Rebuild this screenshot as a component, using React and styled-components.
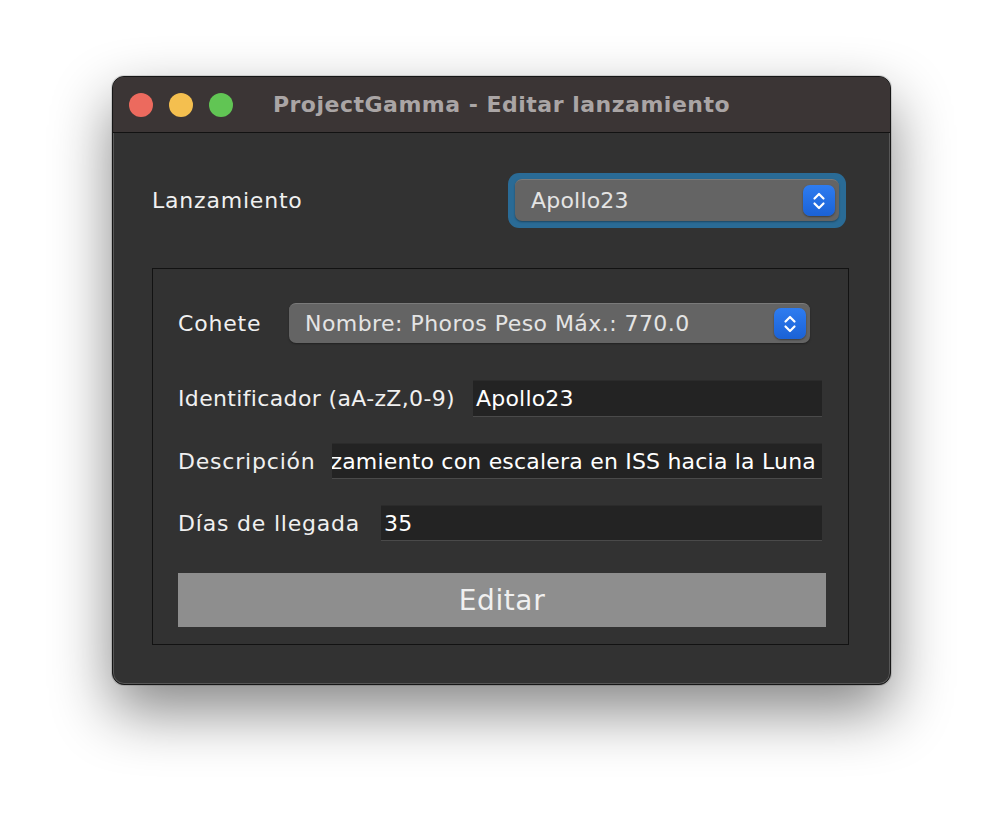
import React from 'react';
import styled, { createGlobalStyle } from 'styled-components';

const GlobalStyle = createGlobalStyle`
  html, body {
    margin: 0;
    padding: 0;
    background: #ffffff;
  }
  * {
    box-sizing: border-box;
  }
`;

const BODY_FONT = `"DejaVu Sans", "Liberation Sans", sans-serif`;

const Page = styled.div`
  width: 1004px;
  height: 834px;
  padding: 76px 0 0 112px;
  overflow: hidden;
`;

const Window = styled.div`
  width: 779px;
  height: 609px;
  border-radius: 12px;
  border: 1px solid #161616;
  background: #323232;
  overflow: hidden;
  box-shadow: 0 0 0 1px rgba(255, 255, 255, 0.18) inset, 0 0 0 1px rgba(0, 0, 0, 0.12),
    0 26px 60px rgba(0, 0, 0, 0.48);
  display: flex;
  flex-direction: column;
`;

const TitleBar = styled.div`
  height: 56px;
  flex: none;
  background: #3b3535;
  border-bottom: 1px solid #121212;
  display: flex;
  align-items: center;
  padding-left: 16px;
`;

const Lights = styled.div`
  display: flex;
  gap: 16px;
`;

const Light = styled.span`
  width: 24px;
  height: 24px;
  border-radius: 50%;
  background: ${(p) => p.color};
`;

const Title = styled.div`
  flex: 1;
  text-align: center;
  margin-left: -120px;
  font-family: "DejaVu Sans", "Liberation Sans", sans-serif;
  font-weight: 700;
  font-size: 22px;
  letter-spacing: 0.5px;
  color: #aaa5a5;
  white-space: nowrap;
`;

const Body = styled.div`
  flex: 1;
  padding: 40px 41px 40px 39px;
  display: flex;
  flex-direction: column;
  font-family: ${BODY_FONT};
  color: #eeeeee;
`;

const TopRow = styled.div`
  display: flex;
  align-items: center;
  justify-content: space-between;
  height: 55px;
  margin-right: 3px;
`;

const Label = styled.span`
  font-size: 22px;
  letter-spacing: ${(p) => p.spacing ?? 0.8}px;
  color: #f0f0f0;
  white-space: nowrap;
`;

const FocusRing = styled.div`
  width: 338px;
  height: 55px;
  border-radius: 11px;
  background: #2a6b96;
  padding: 6px 7px;
`;

const Select = styled.div`
  height: ${(p) => p.h}px;
  width: ${(p) => (p.w ? `${p.w}px` : '100%')};
  border-radius: 7px;
  background: #646464;
  border-top: 1px solid #7a7a7a;
  box-shadow: 0 1px 2px rgba(0, 0, 0, 0.35);
  display: flex;
  align-items: center;
  justify-content: space-between;
  padding: 0 4px 0 16px;
`;

const SelectText = styled.span`
  font-size: 22px;
  letter-spacing: ${(p) => p.spacing}px;
  color: #e4e4e4;
  white-space: nowrap;
`;

const Stepper = styled.div`
  width: 32px;
  height: 31px;
  border-radius: 7px;
  background: linear-gradient(#2e7cf0, #1b62d6);
  box-shadow: 0 1px 2px rgba(0, 0, 0, 0.4);
  display: flex;
  align-items: center;
  justify-content: center;
`;

const Panel = styled.div`
  margin-top: 40px;
  height: 377px;
  border: 1px solid #121212;
  padding: 34px 24px 0 25px;
  display: flex;
  flex-direction: column;
`;

const Row = styled.div`
  display: flex;
  align-items: center;
  justify-content: space-between;
  height: ${(p) => p.h}px;
  margin-top: ${(p) => p.mt}px;
  padding-right: ${(p) => p.pr}px;
`;

const Field = styled.div`
  width: ${(p) => p.w}px;
  height: 100%;
  background: #232323;
  border-top: 1px solid #2b2b2b;
  border-bottom: 1px solid #4a4a4a;
  display: flex;
  align-items: center;
  justify-content: ${(p) => (p.end ? 'flex-end' : 'flex-start')};
  padding: 0 ${(p) => (p.end ? 6 : 3)}px 0 3px;
  overflow: hidden;
  font-size: 22px;
  letter-spacing: 0.2px;
  color: #ffffff;
  white-space: nowrap;
`;

const Button = styled.button`
  margin-top: 32px;
  height: 54px;
  width: 648px;
  border: none;
  background: #8e8e8e;
  color: #f0f0f0;
  font-family: ${BODY_FONT};
  font-size: 28px;
  letter-spacing: 0.6px;
  padding: 0;
`;

const Chevrons = () => (
  <svg width="14" height="22" viewBox="0 0 14 22" fill="none">
    <path d="M2.5 8.5 L7 4 L11.5 8.5" stroke="#fff" strokeWidth="2.2" strokeLinecap="round" strokeLinejoin="round" />
    <path d="M2.5 13.5 L7 18 L11.5 13.5" stroke="#fff" strokeWidth="2.2" strokeLinecap="round" strokeLinejoin="round" />
  </svg>
);

const App = () => (
  <>
    <GlobalStyle />
    <Page>
      <Window>
        <TitleBar>
          <Lights>
            <Light color="#ec6a5e" />
            <Light color="#f4bf4f" />
            <Light color="#61c554" />
          </Lights>
          <Title>ProjectGamma - Editar lanzamiento</Title>
        </TitleBar>
        <Body>
          <TopRow>
            <Label>Lanzamiento</Label>
            <FocusRing>
              <Select h={42}>
                <SelectText spacing={0.2}>Apollo23</SelectText>
                <Stepper>
                  <Chevrons />
                </Stepper>
              </Select>
            </FocusRing>
          </TopRow>
          <Panel>
            <Row h={40} mt={0} pr={14}>
              <Label>Cohete</Label>
              <Select h={40} w={521}>
                <SelectText spacing={0.45}>Nombre: Phoros Peso Máx.: 770.0</SelectText>
                <Stepper>
                  <Chevrons />
                </Stepper>
              </Select>
            </Row>
            <Row h={37} mt={37} pr={2}>
              <Label spacing={0.35}>Identificador (aA-zZ,0-9)</Label>
              <Field w={349}>Apollo23</Field>
            </Row>
            <Row h={36} mt={26} pr={2}>
              <Label>Descripción</Label>
              <Field w={490} end>
                Lanzamiento con escalera en ISS hacia la Luna
              </Field>
            </Row>
            <Row h={36} mt={26} pr={2}>
              <Label>Días de llegada</Label>
              <Field w={441}>35</Field>
            </Row>
            <Button>Editar</Button>
          </Panel>
        </Body>
      </Window>
    </Page>
  </>
);

export default App;
